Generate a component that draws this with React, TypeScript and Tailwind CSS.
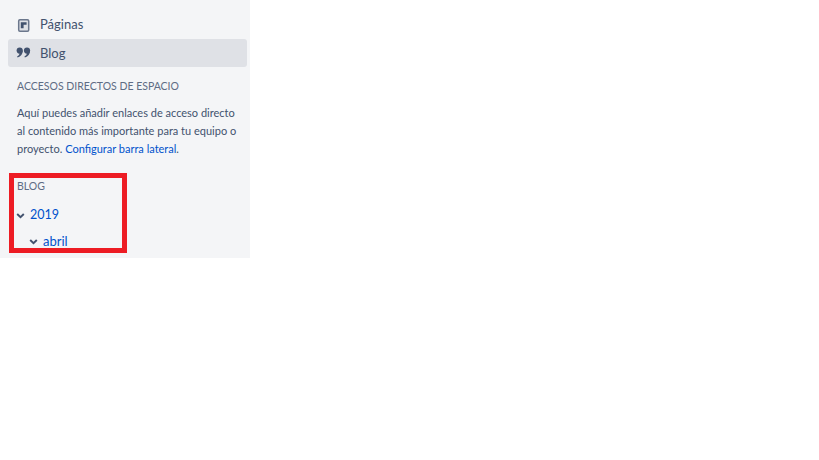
export default function App() {
  return (
    <div className="relative h-[460px] w-[819px] overflow-hidden bg-white font-['Lato',sans-serif]">
      <aside className="flex h-[258px] w-[250px] flex-col overflow-hidden bg-[#f4f5f7] pl-2 pr-[3px] pt-[11px]">
        <nav className="flex flex-col">
          <div className="flex h-7 items-center gap-[9px] pl-2 text-[13px] text-[#42526e]">
            <svg width="15" height="16" viewBox="0 0 15 16" className="mt-[1px]">
              <rect x="2.7" y="1.7" width="10" height="11.6" rx="1.2" fill="#dfe1e6" stroke="#6b778c" strokeWidth="1.5" />
              <path d="M4.8 4.2h5.8v2.6H7.6v3.4H4.8z" fill="#42526e" />
            </svg>
            <span>Páginas</span>
          </div>
          <div className="flex h-7 items-center gap-[9px] rounded-[3px] bg-[#dfe1e6] pl-2 text-[13px] text-[#42526e]">
            <svg width="15" height="16" viewBox="0 0 15 16">
              <circle cx="3.7" cy="5.6" r="3.1" fill="#42526e" />
              <path d="M6.8 5.6c0 3.8-2 6.2-5.2 6.9l-.5-1.1c1.6-.7 2.5-2 2.6-3.6z" fill="#42526e" />
              <circle cx="11" cy="5.6" r="3.1" fill="#42526e" />
              <path d="M14.1 5.6c0 3.8-2 6.2-5.2 6.9l-.5-1.1c1.6-.7 2.5-2 2.6-3.6z" fill="#42526e" />
            </svg>
            <span className="mt-[1px]">Blog</span>
          </div>
        </nav>
        <h2 className="mt-[11px] pl-[9px] text-[10.5px] leading-4 font-normal text-[#5e6c84]">ACCESOS DIRECTOS DE ESPACIO</h2>
        <p className="mt-[10px] pl-[9px] pr-2 text-[11px] leading-[18px] text-[#42526e]">
          Aquí puedes añadir enlaces de acceso directo al contenido más importante para tu equipo o proyecto.{" "}
          <span className="text-[#0052cc]">Configurar barra lateral</span>.
        </p>
        <h2 className="mt-[20px] pl-[9px] text-[10.5px] leading-4 font-normal text-[#5e6c84]">BLOG</h2>
        <div className="mt-[8px] flex h-[26px] items-center pl-2 text-[12.5px] text-[#0052cc]">
          <svg width="9" height="9" viewBox="0 0 9 9" className="mr-[5px]">
            <path d="M1.2 3l3.3 3.2L7.8 3" fill="none" stroke="#42526e" strokeWidth="1.9" />
          </svg>
          <span>2019</span>
        </div>
        <div className="flex h-[27px] items-center pl-[21px] text-[13px] text-[#0052cc]">
          <svg width="9" height="9" viewBox="0 0 9 9" className="mr-[5px]">
            <path d="M1.2 3l3.3 3.2L7.8 3" fill="none" stroke="#42526e" strokeWidth="1.9" />
          </svg>
          <span>abril</span>
        </div>
      </aside>
      <div className="absolute left-[9px] top-[173px] h-[80px] w-[118px] border-[5px] border-[#ed1c24]" />
    </div>
  );
}
